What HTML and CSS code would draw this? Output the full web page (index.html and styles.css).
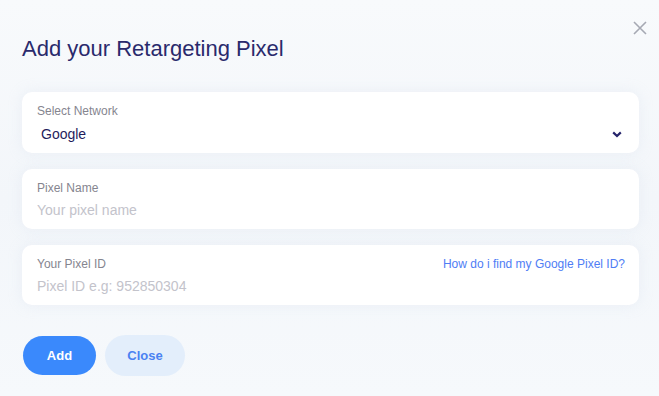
FILE: index.html
```
<!DOCTYPE html>
<html lang="en">
<head>
<meta charset="utf-8">
<title>Add your Retargeting Pixel</title>
<link rel="stylesheet" href="styles.css">
</head>
<body>
<div class="modal">
  <button class="close-x" aria-label="Close">
    <svg width="14" height="14" viewBox="0 0 14 14"><path d="M1 1L13 13M13 1L1 13" stroke="#a6a9b3" stroke-width="1.6" fill="none"/></svg>
  </button>
  <h1 class="title">Add your Retargeting Pixel</h1>
  <div class="fields">
    <div class="card card-select">
      <div class="label-row"><label class="label">Select Network</label></div>
      <div class="select-wrap">
        <select class="select">
          <option>Google</option>
          <option>Facebook</option>
        </select>
        <svg class="chevron" width="10" height="7" viewBox="0 0 10 7"><path d="M1.2 1.4L5 5L8.8 1.4" stroke="#25246b" stroke-width="2.2" fill="none"/></svg>
      </div>
    </div>
    <div class="card">
      <div class="label-row"><label class="label">Pixel Name</label></div>
      <input class="input" type="text" placeholder="Your pixel name">
    </div>
    <div class="card">
      <div class="label-row">
        <label class="label">Your Pixel ID</label>
        <a class="help" href="#">How do i find my Google Pixel ID?</a>
      </div>
      <input class="input" type="text" placeholder="Pixel ID e.g: 952850304">
    </div>
  </div>
  <div class="actions">
    <button class="btn btn-add">Add</button>
    <button class="btn btn-close">Close</button>
  </div>
</div>
</body>
</html>
```
FILE: styles.css
```
* { box-sizing: border-box; }
html, body { margin: 0; padding: 0; }
body {
  width: 659px;
  height: 396px;
  overflow: hidden;
  font-family: "Liberation Sans", Arial, sans-serif;
  background: linear-gradient(180deg, #f8fafc 0%, #f3f6fa 50%, #f6f9fc 100%);
}
.modal {
  position: relative;
  padding: 36px 20px 0 22px;
}
.close-x {
  position: absolute;
  top: 21px;
  left: 633px;
  width: 14px;
  height: 14px;
  padding: 0;
  border: 0;
  background: none;
  display: flex;
}
.title {
  margin: 0 0 31px;
  font-size: 22px;
  line-height: 25px;
  font-weight: 400;
  color: #2a2a6c;
}
.fields {
  display: flex;
  flex-direction: column;
  gap: 16px;
}
.card {
  background: #fff;
  border-radius: 10px;
  padding: 12px 14px 9px 15px;
  height: 60px;
  box-shadow: 0 0 14px rgba(205, 215, 232, 0.25);
  display: flex;
  flex-direction: column;
  gap: 5px;
}
.card-select { height: 61px; gap: 6px; }
.label-row {
  display: flex;
  justify-content: space-between;
  align-items: baseline;
  height: 14px;
}
.label {
  font-size: 12px;
  line-height: 14px;
  color: #85858f;
}
.help {
  font-size: 12px;
  line-height: 14px;
  color: #4f7df5;
  text-decoration: none;
}
.select-wrap {
  position: relative;
  display: flex;
  align-items: center;
  height: 20px;
}
.select {
  appearance: none;
  -webkit-appearance: none;
  border: 0;
  outline: none;
  background: transparent;
  width: 100%;
  height: 20px;
  padding: 0 0 0 4px;
  margin: 0;
  font-family: inherit;
  font-size: 14px;
  color: #1f1d5c;
}
.chevron {
  position: absolute;
  right: 3px;
  top: 7px;
}
.input {
  border: 0;
  outline: none;
  padding: 0;
  margin: 0;
  height: 20px;
  line-height: 20px;
  font-family: inherit;
  font-size: 14px;
  color: #1f1d5c;
  background: transparent;
}
.input::placeholder { color: #c3c3cb; }
.actions {
  display: flex;
  align-items: center;
  gap: 9px;
  margin-top: 30px;
  padding-left: 1px;
}
.btn {
  border: 0;
  border-radius: 21px;
  font-family: inherit;
  font-weight: 700;
  font-size: 13px;
  padding: 0;
}
.btn-add {
  width: 73px;
  height: 39px;
  background: #3a89fc;
  color: #fff;
}
.btn-close {
  width: 80px;
  height: 41px;
  background: #e3eefb;
  color: #4a82f2;
}
```
